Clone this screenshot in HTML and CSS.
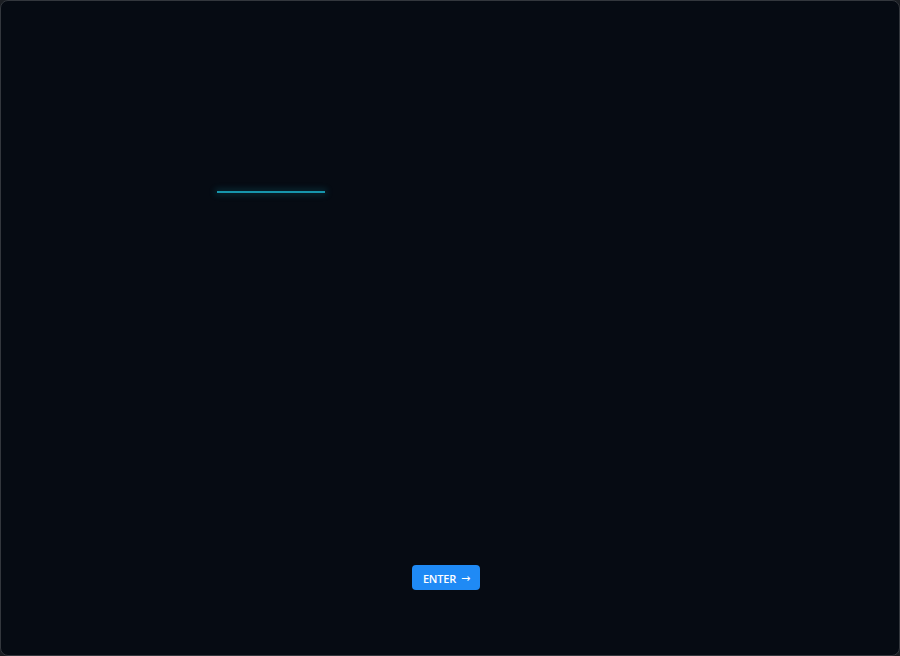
FILE: index.html
```html
<!DOCTYPE html>
<html lang="en">
<head>
    <meta charset="UTF-8">
    <meta name="viewport" content="width=device-width, initial-scale=1.0">
    <title>Boot</title>
    <link rel="stylesheet" href="styles.css">
</head>
<body>
    <div class="window">
        <div class="progress"><div class="progress-bar"></div></div>
        <div class="spacer"></div>
        <div class="actions">
            <button class="enter-button">ENTER <span class="arrow">→</span></button>
        </div>
    </div>
</body>
</html>
```

FILE: styles.css
```css
html, body {
    margin: 0;
    padding: 0;
    height: 100%;
    background-color: #1b1e23;
}

body {
    font-family: "Open Sans", "Noto Sans", sans-serif;
    color: #fff;
}

.window {
    box-sizing: border-box;
    height: 656px;
    width: 900px;
    display: flex;
    flex-direction: column;
    background-color: #060b13;
    border: 1px solid #33373d;
    border-radius: 8px;
}

.progress {
    margin-top: 190px;
    margin-left: 216px;
    width: 108px;
    height: 2px;
    box-shadow: 0 0 6px 2px rgba(20, 150, 175, 0.22);
}

.progress-bar {
    width: 100%;
    height: 100%;
    background-color: #1796ad;
}

.spacer {
    flex: 1;
}

.actions {
    display: flex;
    padding-left: 411px;
    margin-bottom: 65px;
}

.enter-button {
    display: flex;
    align-items: center;
    justify-content: center;
    box-sizing: border-box;
    width: 68px;
    height: 25px;
    padding: 1px 0 0 1px;
    font-family: inherit;
    font-size: 11px;
    font-weight: 600;
    letter-spacing: -0.2px;
    line-height: 1;
    color: #fff;
    background-color: #1f8af5;
    border: none;
    border-radius: 4px;
    cursor: pointer;
}

.enter-button .arrow {
    margin-left: 5px;
    padding-top: 1px;
    font-family: "DejaVu Sans", sans-serif;
    font-size: 11px;
    font-weight: 400;
}
```
